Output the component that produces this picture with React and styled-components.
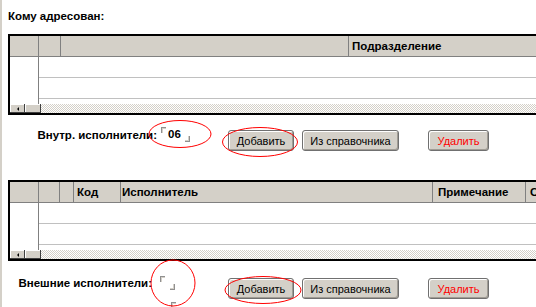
import React from 'react'
import styled, { createGlobalStyle } from 'styled-components'

const GlobalStyle = createGlobalStyle`
  html, body {
    margin: 0;
    padding: 0;
    background: #fff;
    overflow: hidden;
  }
  body {
    font-family: "Liberation Sans", Arial, sans-serif;
    font-size: 11px;
    color: #000;
  }
`

const innerCols = [
  { w: 29 },
  { w: 22 },
  { w: 288 },
  { title: 'Подразделение', pad: 3 },
]

const outerCols = [
  { w: 29 },
  { w: 21 },
  { w: 14 },
  { w: 47, title: 'Код', pad: 3 },
  { w: 312, title: 'Исполнитель', pad: 1 },
  { w: 93, title: 'Примечание', pad: 5 },
  { title: 'Срок', pad: 4 },
]

const rings = [
  { cx: 180, cy: 134, rx: 31, ry: 13.5 },
  { cx: 260, cy: 142, rx: 37.5, ry: 14.5 },
  { cx: 173, cy: 283, rx: 22, ry: 23 },
  { cx: 263, cy: 290, rx: 38, ry: 13.5 },
]

const DataGrid = ({ cols }) => (
  <Grid>
    <HeadRow>
      {cols.map((c, i) => (
        <HeadCell key={i} $w={c.w} $pad={c.pad || 0}>{c.title}</HeadCell>
      ))}
    </HeadRow>
    <Body>
      <RowHeads />
      <Rows>
        <Row />
        <Row />
        <Row />
      </Rows>
    </Body>
    <ScrollBar>
      <ScrollBtn><LeftArrow /></ScrollBtn>
      <Thumb />
      <Track />
    </ScrollBar>
  </Grid>
)

const Actions = ({ label, value, top, shift, fieldW, fieldH, fieldTop, fieldLeft }) => (
  <ActionRow $top={top}>
    <Label $shift={shift}>{label}</Label>
    <FieldCell>
      <Field $w={fieldW} $h={fieldH} $top={fieldTop} $left={fieldLeft}>{value}</Field>
    </FieldCell>
    <Button $w={66}>Добавить</Button>
    <Button $w={97}>Из справочника</Button>
    <Button $w={61} $danger>Удалить</Button>
  </ActionRow>
)

export default function App() {
  return (
    <Page>
      <GlobalStyle />
      <Strip />
      <Content>
        <Title>Кому адресован:</Title>
        <GridWrap $top={11}>
          <DataGrid cols={innerCols} />
        </GridWrap>
        <Actions label="Внутр. исполнители:" value="06" top={15} shift={3}
          fieldW={29} fieldH={15} fieldTop={-3} fieldLeft={1} />
        <GridWrap $top={29}>
          <DataGrid cols={outerCols} />
        </GridWrap>
        <Actions label="Внешние исполнители:" value="" top={17} shift={8}
          fieldW={15} fieldH={14} fieldTop={-2} fieldLeft={0} />
        <LastRow>
          <Label $shift={8}>Ответственный:</Label>
          <FieldCell>
            <Field $w={15} $h={14} $top={-5} $left={11} />
          </FieldCell>
        </LastRow>
      </Content>
      <Marks width="536" height="307" viewBox="0 0 536 307">
        {rings.map((r, i) => (
          <ellipse key={i} cx={r.cx} cy={r.cy} rx={r.rx} ry={r.ry}
            fill="none" stroke="#ff0000" strokeWidth="1" />
        ))}
      </Marks>
    </Page>
  )
}

const Page = styled.div`
  position: relative;
  display: flex;
  width: 536px;
  height: 307px;
  overflow: hidden;
`

const Strip = styled.div`
  flex: 0 0 2px;
  background: #d4d0c8;
`

const Content = styled.div`
  flex: 1;
  min-width: 0;
  padding: 10px 0 0 6px;
`

const Title = styled.div`
  font-weight: bold;
  font-size: 11.5px;
  line-height: 13px;
`

const GridWrap = styled.div`
  margin-top: ${p => p.$top}px;
`

const Grid = styled.div`
  width: 560px;
  box-sizing: border-box;
  border: 2px solid #000;
  border-right: none;
  background: #fff;
`

const HeadRow = styled.div`
  display: flex;
  height: 20px;
  background: #d4d0c8;
  border-bottom: 1px solid #808080;
`

const HeadCell = styled.div`
  flex: ${p => (p.$w ? `0 0 ${p.$w}px` : '1')};
  box-sizing: border-box;
  border-right: 1px solid #808080;
  padding-left: ${p => p.$pad}px;
  font-weight: bold;
  font-size: 11.5px;
  line-height: 20px;
  white-space: nowrap;
  overflow: hidden;
`

const Body = styled.div`
  display: flex;
  height: 47px;
  overflow: hidden;
`

const RowHeads = styled.div`
  flex: 0 0 29px;
  box-sizing: border-box;
  border-right: 1px solid #808080;
`

const Rows = styled.div`
  flex: 1;
`

const Row = styled.div`
  height: 20px;
  border-bottom: 1px solid #c0c0c0;
`

const ScrollBar = styled.div`
  display: flex;
  height: 9px;
`

const ScrollBtn = styled.div`
  flex: 0 0 15px;
  display: flex;
  align-items: center;
  justify-content: center;
  background: #d4d0c8;
  box-shadow: inset -1px -1px #404040, inset 1px 1px #fff;
`

const LeftArrow = styled.div`
  width: 0;
  height: 0;
  border-top: 2px solid transparent;
  border-bottom: 2px solid transparent;
  border-right: 2px solid #000;
`

const Thumb = styled.div`
  flex: 0 0 16px;
  background: #d4d0c8;
  box-shadow: inset -1px -1px #404040, inset 1px 1px #fff;
`

const Track = styled.div`
  flex: 1;
  background: repeating-conic-gradient(#d4d0c8 0 25%, #fff 0 50%) 0 0 / 2px 2px;
`

const ActionRow = styled.div`
  display: grid;
  grid-template-columns: 152px 68px 66px 97px 61px;
  align-items: start;
  margin-top: ${p => p.$top}px;
  height: 21px;

  & > :nth-child(4) { margin-left: 8px; }
  & > :nth-child(5) { margin-left: 37px; }
`

const LastRow = styled.div`
  display: grid;
  grid-template-columns: 152px 68px;
  align-items: start;
  margin-top: 8px;
`

const Label = styled.div`
  font-weight: bold;
  font-size: 11.5px;
  line-height: 13px;
  margin-top: -1px;
  padding-right: ${p => p.$shift}px;
  text-align: right;
  white-space: nowrap;
`

const FieldCell = styled.div`
  position: relative;
`

const Field = styled.div`
  position: relative;
  box-sizing: border-box;
  width: ${p => p.$w}px;
  height: ${p => p.$h}px;
  margin-top: ${p => p.$top}px;
  margin-left: ${p => p.$left}px;
  padding-left: 7px;
  font-weight: bold;
  font-size: 11.5px;
  line-height: 15px;

  &::before, &::after {
    content: '';
    position: absolute;
    width: 4px;
    height: 5px;
  }
  &::before {
    left: 0;
    top: 0;
    border-top: 1px solid #909090;
    border-left: 1px solid #909090;
    box-shadow: inset 1px 1px #d4d0c8;
  }
  &::after {
    right: 0;
    bottom: 0;
    border-bottom: 1px solid #909090;
    border-right: 1px solid #909090;
    box-shadow: inset -1px -1px #d4d0c8;
  }
`

const Button = styled.button`
  width: ${p => p.$w}px;
  height: 21px;
  padding: 0;
  box-sizing: border-box;
  font-family: "Liberation Sans", Arial, sans-serif;
  font-size: 11px;
  color: ${p => (p.$danger ? '#ff0000' : '#000')};
  background: #d4d0c8;
  border: 1px solid #707070;
  border-radius: 3px;
  box-shadow: inset 1px 1px #fff, inset -1px -1px #a09c94;
`

const Marks = styled.svg`
  position: absolute;
  left: 0;
  top: 0;
  pointer-events: none;
`
